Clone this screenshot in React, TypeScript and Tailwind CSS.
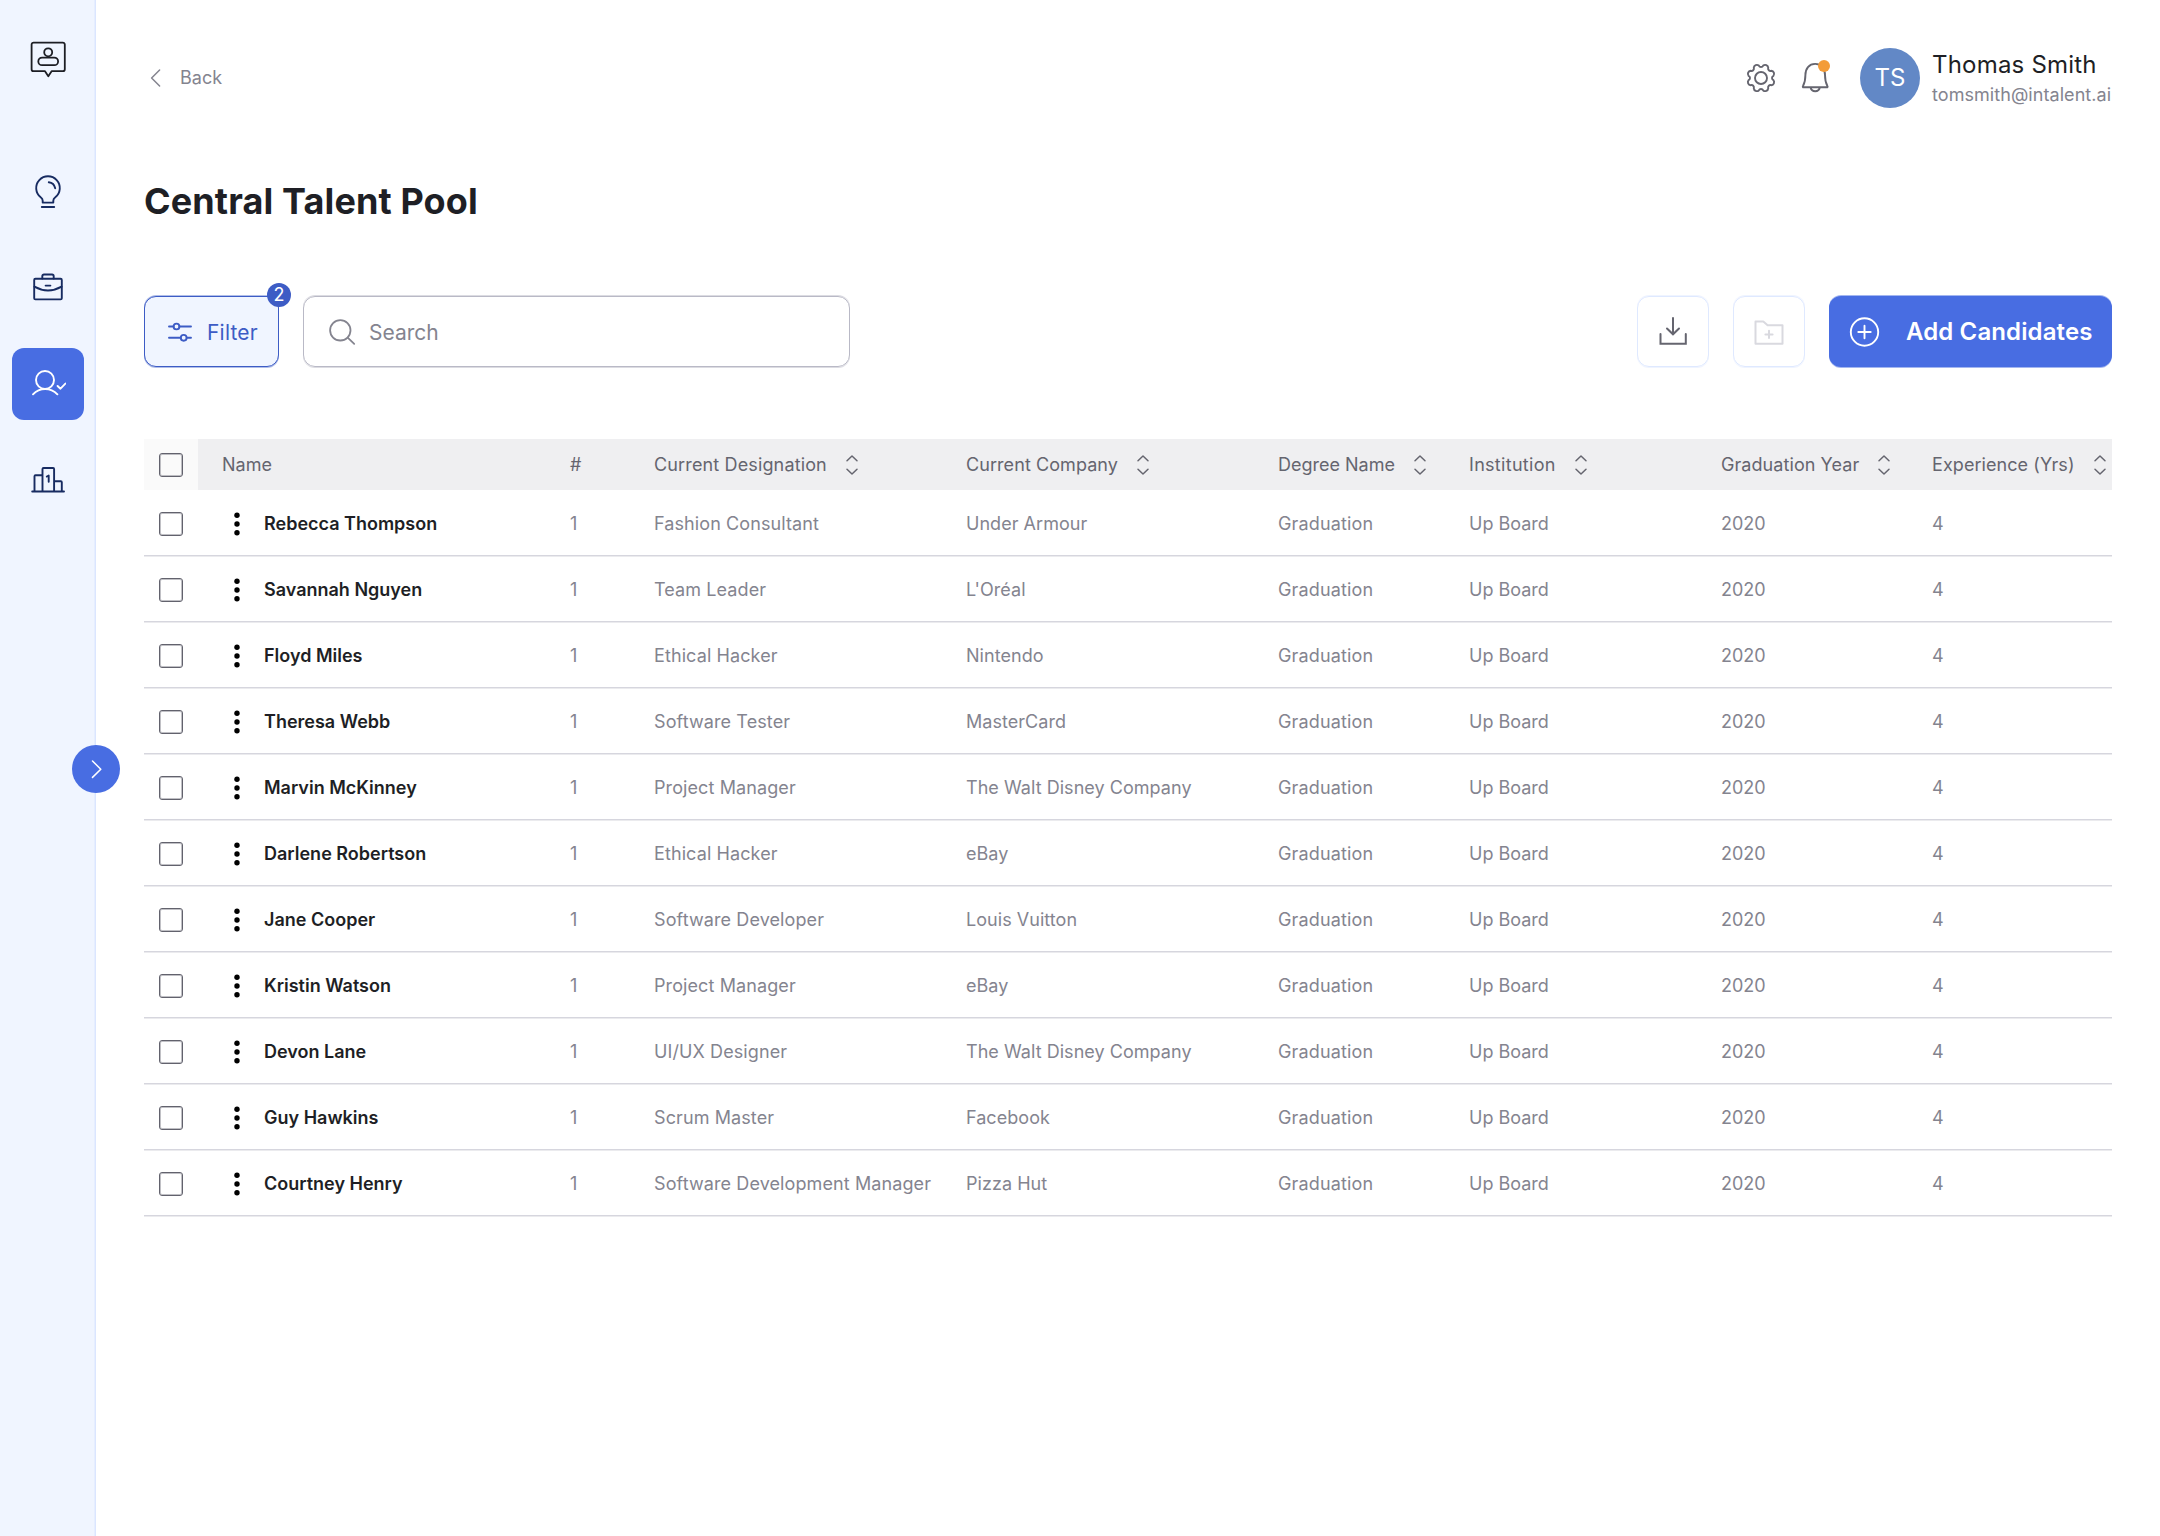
import type { ReactNode } from "react";

const candidates = [
  { name: "Rebecca Thompson", designation: "Fashion Consultant", company: "Under Armour" },
  { name: "Savannah Nguyen", designation: "Team Leader", company: "L'Oréal" },
  { name: "Floyd Miles", designation: "Ethical Hacker", company: "Nintendo" },
  { name: "Theresa Webb", designation: "Software Tester", company: "MasterCard" },
  { name: "Marvin McKinney", designation: "Project Manager", company: "The Walt Disney Company" },
  { name: "Darlene Robertson", designation: "Ethical Hacker", company: "eBay" },
  { name: "Jane Cooper", designation: "Software Developer", company: "Louis Vuitton" },
  { name: "Kristin Watson", designation: "Project Manager", company: "eBay" },
  { name: "Devon Lane", designation: "UI/UX Designer", company: "The Walt Disney Company" },
  { name: "Guy Hawkins", designation: "Scrum Master", company: "Facebook" },
  { name: "Courtney Henry", designation: "Software Development Manager", company: "Pizza Hut" },
];

const sortableColumns = [
  { label: "Current Designation", tracking: "tracking-[0.14px]" },
  { label: "Current Company", tracking: "tracking-[0.07px]" },
  { label: "Degree Name", tracking: "tracking-normal" },
  { label: "Institution", tracking: "tracking-[0.3px]" },
  { label: "Graduation Year", tracking: "tracking-[0.07px]" },
  { label: "Experience (Yrs)", tracking: "tracking-[0.07px]" },
];

const rowGrid =
  "grid grid-cols-[54px_372px_84px_312px_312px_191px_252px_211px_180px] items-center";

interface IconProps {
  size?: number;
  stroke?: number;
  className?: string;
  children: ReactNode;
}

function Icon({ size = 36, stroke = 1.9, className, children }: IconProps) {
  return (
    <svg
      width={size}
      height={size}
      viewBox={`0 0 ${size} ${size}`}
      fill="none"
      stroke="currentColor"
      strokeWidth={stroke}
      strokeLinecap="round"
      strokeLinejoin="round"
      className={className}
    >
      {children}
    </svg>
  );
}

// eight rounded teeth with a notch at every 45 degrees
function gearPath() {
  const point = (deg: number) => {
    const a = (deg * Math.PI) / 180;
    return `${(18 + 12.6 * Math.cos(a)).toFixed(2)} ${(18 + 12.6 * Math.sin(a)).toFixed(2)}`;
  };
  let d = `M${point(-10)}`;
  for (let k = 0; k < 8; k++) {
    d += `A2.4 2.4 0 0 0 ${point(k * 45 + 10)}A3.1 3.1 0 0 1 ${point(k * 45 + 35)}`;
  }
  return d + "Z";
}

function Checkbox() {
  return (
    <span className="ml-[15px] block size-6 rounded-[3px] border border-[#62626d] shadow-[inset_0_0_0_1px_#62626d66]" />
  );
}

function SortIcon() {
  return (
    <Icon size={24} stroke={1.5}>
      <path d="M7 7.8 12 3l5 4.8M7 16.2 12 21l5-4.8" />
    </Icon>
  );
}

function Sidebar() {
  return (
    <aside className="relative flex w-24 shrink-0 flex-col items-center border-r border-[#dbe6ff] bg-[#f0f5ff] text-[#172b61] shadow-[inset_-1px_0_0_#e6eeff]">
      <Icon size={48} stroke={1.8} className="mt-9 ml-px text-[#1d1e24]">
        <path d="M30 6.6H9.600a2 2 0 0 0-2 2v24.600a2 2 0 0 0 2 2H21l3.300 5 3.300-5h11.200a2 2 0 0 0 2-2V8.600a2 2 0 0 0-2-2Z" />
        <circle cx="24.2" cy="16.3" r="4" />
        <rect x="14.3" y="21.6" width="19.8" height="7.6" rx="3.8" />
      </Icon>
      <nav className="mt-[72px] -mr-px flex flex-col gap-6">
        <a className="flex size-[72px] items-center justify-center">
          <Icon>
            <path d="M12.7 28.6v-1.900c0-1.500-.8-2.500-2-3.400a11.800 11.800 0 1 1 14.600 0c-1.200.9-2 1.900-2 3.400v1.900ZM11.800 33h12.400M18.800 8.300c3.400.4 5.700 2.800 6.400 6" />
          </Icon>
        </a>
        <a className="flex size-[72px] items-center justify-center">
          <Icon>
            <rect x="4.2" y="8.8" width="27.6" height="20.6" rx="1.2" />
            <path d="M12.3 8.6V6.2c0-1 .7-1.7 1.7-1.7h8c1 0 1.7.7 1.7 1.7v2.4M15.6 15.6h4.8M4.4 16.7c8.6 4.8 18.6 4.8 27.2 0" />
          </Icon>
        </a>
        <a className="flex size-[72px] items-center justify-center rounded-xl bg-[#486de2] text-white">
          <Icon>
            <circle cx="15" cy="14" r="9" />
            <path d="M3 28.3c6.6-7.1 17.6-7.1 24.4 0M27.6 20l2.9 2.7 4.9-5.1" />
          </Icon>
        </a>
        <a className="flex size-[72px] items-center justify-center">
          <Icon>
            <path d="M2.2 29.5H34M4.5 29.3v-15a1 1 0 0 1 1-1h6.8M12.5 29.3V7a1 1 0 0 1 1-1h9.6a1 1 0 0 1 1 1v22.3M24.3 19.2h6.5a1 1 0 0 1 1 1v9.1M16.8 14.5l1.900-.9v6.100" />
          </Icon>
        </a>
      </nav>
      <button className="absolute top-[745px] -right-[25px] flex size-12 items-center justify-center rounded-full bg-[#486de2] text-white">
        <Icon size={24} stroke={1.5}>
          <path d="m8.5 4 8.3 8.2-8.3 8.2" />
        </Icon>
      </button>
    </aside>
  );
}

function TopBar() {
  return (
    <header className="flex h-[60px] items-center justify-between">
      <button className="flex items-center gap-6 text-lg text-[#84848f]">
        <Icon size={12} stroke={1.5} className="ml-[5px] overflow-visible">
          <path d="M10.6-2 2.6 6l8 8" />
        </Icon>
        <span className="-ml-[5px]">Back</span>
      </button>
      <div className="flex items-center text-[#65656f]">
        <Icon>
          <path d={gearPath()} />
          <circle cx="18" cy="18" r="6" />
        </Icon>
        <div className="relative ml-[18px]">
          <Icon>
            <path d="M8.4 15c0-6.500 3.600-11.100 9.800-11.100S28 8.500 28 15s.6 7.800 2.400 11c.5.8.1 1.300-.6 1.300H6.600c-.7 0-1.100-.5-.6-1.300 1.800-3.200 2.400-4.500 2.400-11ZM13.600 27.500a4.700 4.700 0 0 0 9.200 0" />
          </Icon>
          <span className="absolute top-0 left-[21px] size-3 rounded-full bg-[#f39c38]" />
        </div>
        <span className="ml-[27px] flex size-[60px] items-center justify-center rounded-full bg-[#6288c6] text-2xl text-white">
          TS
        </span>
        <div className="ml-3 w-[180px]">
          <p className="pt-px text-2xl leading-[30px] tracking-[0.2px] text-[#1e1f25]">
            Thomas Smith
          </p>
          <p className="mt-[3px] text-lg leading-6 tracking-[0.06px] text-[#84848f]">
            tomsmith@intalent.ai
          </p>
        </div>
      </div>
    </header>
  );
}

function Toolbar() {
  return (
    <div className="mt-[71px] flex h-[71px] items-center">
      <button className="relative flex h-[71px] w-[135px] items-center rounded-xl border border-[#3d5cc5] bg-[#f0f5ff] pl-[22px] text-[21px] text-[#3d5cc5] shadow-[0_1px_0_#3d5cc566,0_-1px_0_#3d5cc566]">
        <Icon size={26}>
          <path d="M2 7.5h4.500M12.500 7.500H24M2 18.800h11.500M19.800 18.800H24" />
          <circle cx="9.5" cy="7.5" r="2.9" />
          <circle cx="16.7" cy="18.8" r="2.9" />
        </Icon>
        <span className="ml-[14px] pt-0.5 tracking-[0.2px]">Filter</span>
        <span className="absolute -top-[14px] -right-[13px] flex size-6 items-center justify-center rounded-full bg-[#3d5cc5] text-lg text-white">
          2
        </span>
      </button>
      <div className="ml-6 flex h-[71px] w-[547px] items-center rounded-xl border border-[#b9b9c6] pl-[22px] text-[21px] text-[#84848f] shadow-[0_1px_0_#b9b9c680,0_-1px_0_#b9b9c680]">
        <Icon size={32} stroke={1.8}>
          <circle cx="14.3" cy="14.3" r="10.2" />
          <path d="m21.7 21.7 6.5 6.2" />
        </Icon>
        <span className="ml-[11px] pt-0.5">Search</span>
      </div>
      <div className="ml-auto flex items-center gap-6">
        <button className="flex h-[71px] w-[72px] items-center justify-center rounded-xl border border-[#dfe9ff] text-[#65656f] shadow-[0_1px_0_#dfe9ff80,0_-1px_0_#dfe9ff80]">
          <Icon stroke={2} className="-ml-px">
            <path d="M18 4v16.300M12 14.500l6 5.800 6-5.800M5.500 20v9.700h25.300V20" strokeLinejoin="miter" />
          </Icon>
        </button>
        <button className="flex h-[71px] w-[72px] items-center justify-center rounded-xl border border-[#dfe9ff] text-[#d9d9df] shadow-[0_1px_0_#dfe9ff80,0_-1px_0_#dfe9ff80]">
          <Icon stroke={2} className="-ml-px">
            <path d="M4.5 7.500h7.800l4.300 3.700h14.900v18.500h-27ZM18 16.800V24M14.400 20.400h7.200" />
          </Icon>
        </button>
        <button className="flex h-[71px] w-[283px] items-center rounded-xl bg-[#486de2] pl-[18px] text-2xl font-semibold text-white shadow-[0_1px_0_#486de280,0_-1px_0_#486de280]">
          <Icon>
            <circle cx="17.5" cy="18" r="13.7" />
            <path d="M17.5 11.800v12.400M11.300 18h12.400" />
          </Icon>
          <span className="ml-[23px] tracking-[0.12px]">Add Candidates</span>
        </button>
      </div>
    </div>
  );
}

function CandidateTable() {
  return (
    <section className="mt-[72px] text-lg text-[#84848f]">
      <div className={`${rowGrid} h-[51px] bg-[#efeff1] text-[#65656f]`}>
        <span className="flex h-full items-center bg-[#fafafa]">
          <Checkbox />
        </span>
        <span className="pl-6">Name</span>
        <span>#</span>
        {sortableColumns.map(({ label, tracking }) => (
          <span
            key={label}
            className={`flex items-center gap-[13px] whitespace-nowrap ${tracking}`}
          >
            {label}
            <SortIcon />
          </span>
        ))}
      </div>
      {candidates.map(({ name, designation, company }) => (
        <div
          key={name}
          className={`${rowGrid} h-[66px] border-b border-[#d6d6de] pt-0.5 shadow-[0_1px_0_#ebebee]`}
        >
          <Checkbox />
          <span className="flex items-center pl-[27px] font-semibold text-[#1e1f25]">
            <svg width="24" height="24" viewBox="0 0 24 24" className="text-black" fill="currentColor">
              <circle cx="12" cy="3.2" r="2.7" />
              <circle cx="12" cy="12" r="2.7" />
              <circle cx="12" cy="20.8" r="2.7" />
            </svg>
            <span className="ml-[15px]">{name}</span>
          </span>
          <span>1</span>
          <span className="tracking-[0.1px]">{designation}</span>
          <span className="tracking-[0.04px]">{company}</span>
          <span className="tracking-[0.14px]">Graduation</span>
          <span>Up Board</span>
          <span>2020</span>
          <span>4</span>
        </div>
      ))}
    </section>
  );
}

export default function App() {
  return (
    <div className="flex h-[1536px] w-[2160px] overflow-hidden bg-white font-['Inter',sans-serif]">
      <Sidebar />
      <main className="flex-1 pt-12 pr-12 pl-12">
        <TopBar />
        <h1 className="mt-[69px] text-4xl leading-[48px] font-bold tracking-[0.12px] text-[#1e1f25]">
          Central Talent Pool
        </h1>
        <Toolbar />
        <CandidateTable />
      </main>
    </div>
  );
}
